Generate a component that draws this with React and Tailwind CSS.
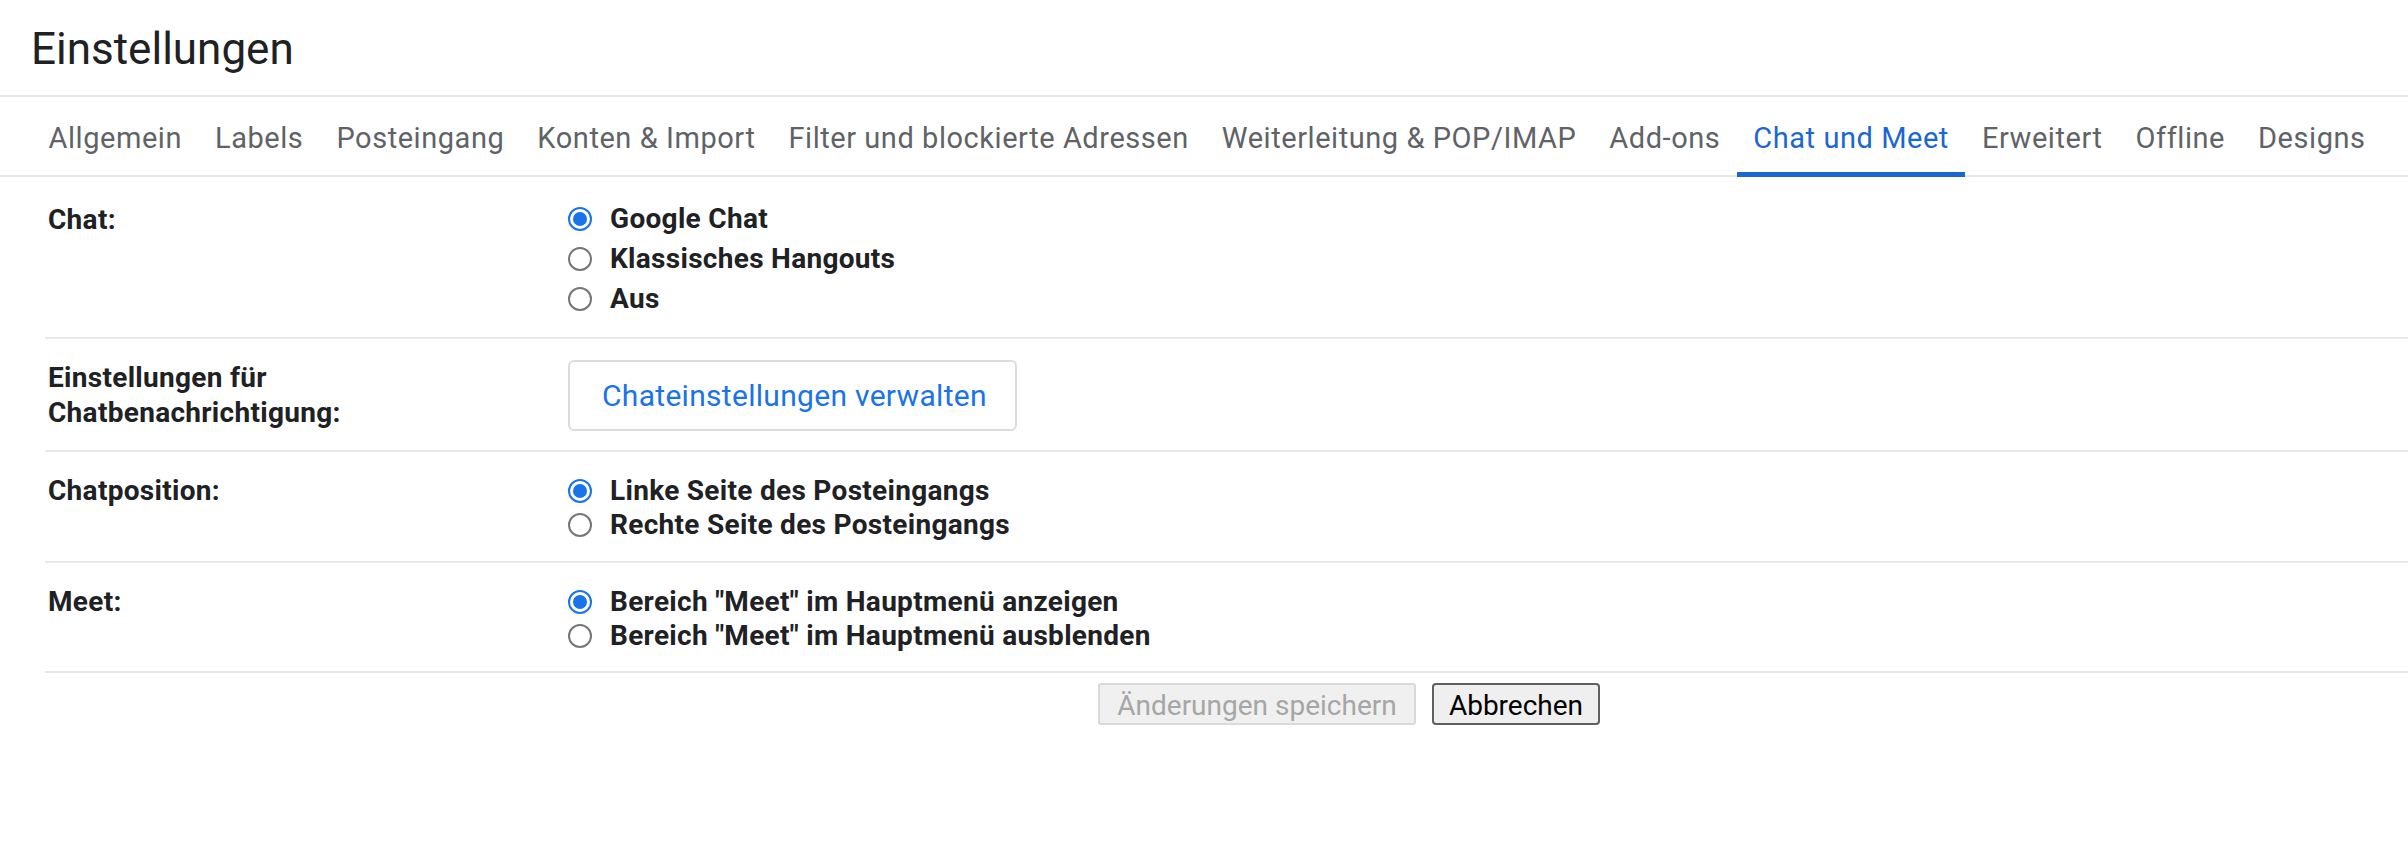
import React from "react";

const tabs = [
  "Allgemein",
  "Labels",
  "Posteingang",
  "Konten & Import",
  "Filter und blockierte Adressen",
  "Weiterleitung & POP/IMAP",
  "Add-ons",
  "Chat und Meet",
  "Erweitert",
  "Offline",
  "Designs",
];

function Radio({ checked }) {
  return checked ? (
    <span className="flex h-[24px] w-[24px] shrink-0 items-center justify-center rounded-full border-2 border-[#1a73e8] bg-white">
      <span className="h-[14px] w-[14px] rounded-full bg-[#1a73e8]" />
    </span>
  ) : (
    <span className="h-[24px] w-[24px] shrink-0 rounded-full border-2 border-[#767676] bg-white" />
  );
}

function Option({ checked, children, lh }) {
  return (
    <div className={`flex items-center gap-[18px] ${lh}`}>
      <Radio checked={checked} />
      <span>{children}</span>
    </div>
  );
}

function Row({ label, children, pt, pb }) {
  return (
    <div className={`flex border-b-2 border-[#e8e8e8] ${pt} ${pb}`}>
      <div className="w-[523px] shrink-0 pl-[3px]">{label}</div>
      <div className="flex-1">{children}</div>
    </div>
  );
}

export default function App() {
  return (
    <div
      className="h-[866px] w-[2408px] overflow-hidden bg-white text-[#202124]"
      style={{ fontFamily: "Roboto, 'Liberation Sans', Arial, sans-serif" }}
    >
      <div className="flex h-[97px] items-center border-b-2 border-[#e8e8e8] pl-[31px] pt-[2px]">
        <h1 className="text-[44px] font-normal leading-none text-[#202124]">Einstellungen</h1>
      </div>

      <div className="flex h-[80px] border-b-2 border-[#e8e8e8] pl-[32px]">
        {tabs.map((t) => {
          const active = t === "Chat und Meet";
          return (
            <div
              key={t}
              className={`relative flex items-center px-[16.5px] pt-[6px] text-[29px] tracking-[0.55px] ${
                active ? "text-[#1a67d2]" : "text-[#5f6368]"
              }`}
            >
              {t}
              {active && (
                <span className="absolute bottom-[-2px] left-0 right-0 h-[5px] bg-[#1a67d2]" />
              )}
            </div>
          );
        })}
      </div>

      <div className="ml-[45px] text-[28px] font-bold tracking-[0.3px] text-[#202124]">
        <Row label="Chat:" pt="pt-[22px]" pb="pb-[18px]">
          <div>
            <Option checked lh="h-[40px]">Google Chat</Option>
            <Option lh="h-[40px]">Klassisches Hangouts</Option>
            <Option lh="h-[40px]">Aus</Option>
          </div>
        </Row>

        <Row
          label={
            <div className="leading-[35px]">
              Einstellungen für
              <br />
              Chatbenachrichtigung:
            </div>
          }
          pt="pt-[21px]"
          pb="pb-[19px]"
        >
          <button className="flex h-[71px] w-[449px] items-center rounded-[6px] border-2 border-[#dadce0] bg-white pl-[32px] text-[30px] font-normal tracking-[0.3px] text-[#1a73e8]">
            Chateinstellungen verwalten
          </button>
        </Row>

        <Row
          label={<div className="leading-[34px]">Chatposition:</div>}
          pt="pt-[22px]"
          pb="pb-[19px]"
        >
          <Option checked lh="h-[34px]">Linke Seite des Posteingangs</Option>
          <Option lh="h-[34px]">Rechte Seite des Posteingangs</Option>
        </Row>

        <Row
          label={<div className="leading-[34px]">Meet:</div>}
          pt="pt-[22px]"
          pb="pb-[18px]"
        >
          <Option checked lh="h-[34px]">Bereich "Meet" im Hauptmenü anzeigen</Option>
          <Option lh="h-[34px]">Bereich "Meet" im Hauptmenü ausblenden</Option>
        </Row>
      </div>

      <div className="flex gap-[16px] pl-[1098px] pt-[10px]">
        <button
          disabled
          className="h-[42px] w-[318px] rounded-[3px] border-2 border-[#d9d9d9] bg-[#f0f0f0] text-[28px] text-[#a6a6a6]"
        >
          Änderungen speichern
        </button>
        <button className="h-[42px] w-[168px] rounded-[4px] border-2 border-[#5f5f5f] bg-[#efefef] text-[28px] text-black">
          Abbrechen
        </button>
      </div>
    </div>
  );
}
